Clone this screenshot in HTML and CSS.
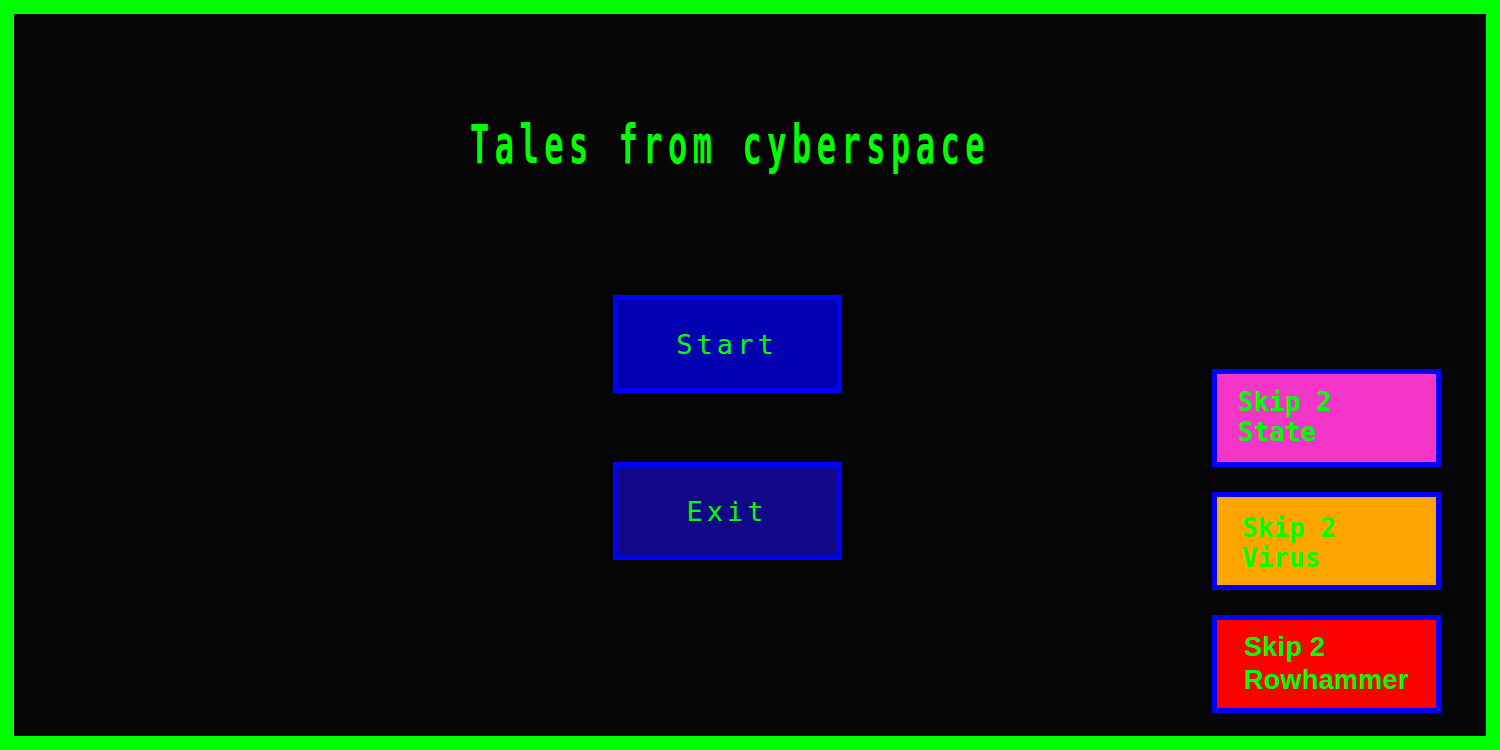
FILE: index.html
```html
<!DOCTYPE html>
<html lang="en">

<head>
    <meta charset="UTF-8">
    <meta name="viewport" content="width=device-width, initial-scale=1.0">
    <title>Tales from cyberspace</title>
    <link rel="stylesheet" href="styles.css">
</head>

<body>
    <div class="screen">
        <div class="main">
            <h1 class="title"><span>Tales from cyberspace</span></h1>
            <button class="menu-btn start">Start</button>
            <button class="menu-btn exit">Exit</button>
        </div>
        <div class="side">
            <button class="skip skip-state">Skip 2<br>State</button>
            <button class="skip skip-virus">Skip 2<br>Virus</button>
            <button class="skip skip-row">Skip 2<br>Rowhammer</button>
        </div>
    </div>
</body>

</html>
```

FILE: styles.css
```css
* {
    padding: 0;
    margin: 0;
    box-sizing: border-box;
}

body {
    width: 1500px;
    height: 750px;
    background: #000;
    overflow: hidden;
}

.screen {
    display: flex;
    width: 1500px;
    height: 750px;
    border: 14px solid #00ff00;
    background: #050505;
}

.main {
    flex: 1;
    display: flex;
    flex-direction: column;
    align-items: center;
    padding-left: 228px;
}

.title {
    margin-top: 111px;
    height: 40px;
    line-height: 40px;
    font-family: "DejaVu Sans Mono", monospace;
    font-size: 32px;
    font-weight: bold;
    letter-spacing: 5.5px;
    color: #00ff00;
    white-space: nowrap;
}

.title span {
    display: inline-block;
    transform: translateX(3px) scaleY(1.65);
}

.menu-btn {
    width: 229px;
    height: 98px;
    border: 5px solid #0000ff;
    font-family: "DejaVu Sans Mono", monospace;
    font-size: 27px;
    letter-spacing: 4px;
    color: #00ff00;
}

.start {
    margin-top: 130px;
    background: #0000b0;
}

.exit {
    margin-top: 69px;
    background: #100888;
}

.side {
    display: flex;
    flex-direction: column;
    justify-content: flex-end;
    gap: 25px;
    padding: 0 45px 23px 0;
}

.skip {
    width: 229px;
    height: 98px;
    border: 5px solid #0000ff;
    text-align: left;
    color: #00ff00;
    font-family: "DejaVu Sans Mono", monospace;
    font-size: 26px;
    font-weight: bold;
    line-height: 30px;
}

.skip-state {
    background: #f535c8;
    padding: 0 0 2px 21px;
}

.skip-virus {
    background: #ffa500;
    padding: 4px 0 0 25px;
}

.skip-row {
    background: #ff0000;
    font-family: "Liberation Sans", Arial, sans-serif;
    font-size: 27px;
    line-height: 33px;
    letter-spacing: 0.3px;
    padding: 0 0 0 27px;
}
```
